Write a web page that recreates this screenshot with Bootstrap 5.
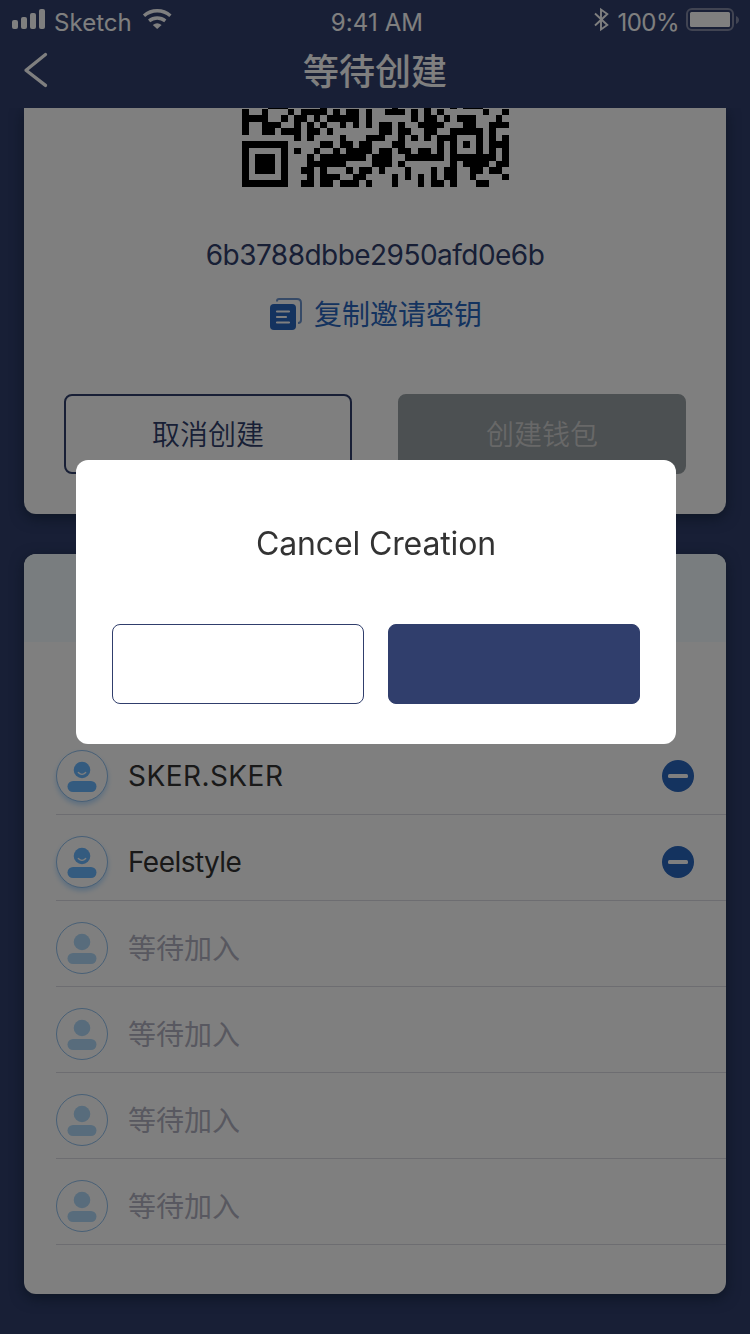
<!DOCTYPE html>
<html lang="zh-CN">
<head>
<meta charset="utf-8">
<meta name="viewport" content="width=device-width, initial-scale=1">
<title>等待创建</title>
<link href="https://cdn.jsdelivr.net/npm/bootstrap@5.3.0/dist/css/bootstrap.min.css" rel="stylesheet">
<style>
body{width:750px;height:1334px;overflow:hidden;background:#303e6c;color:#333;font-family:Inter,"Noto Sans CJK SC",sans-serif;font-size:28px;line-height:40px;font-weight:375}
svg{display:block;flex:none}
.status{height:44px;font-size:24px;line-height:46px;color:#fff;letter-spacing:.05px}
.clock{letter-spacing:.1px}
.percent{letter-spacing:-.5px;margin:0 1px 0 3px}
.topbar{height:64px;font-size:36px;line-height:56px;color:#fff}
.panel{border:0;border-radius:12px;box-shadow:0 4px 14px rgba(14,32,50,.65);margin:0 24px;background:#fff}
.invite{height:406px;border-radius:0 0 12px 12px}
.viewport{height:1226px;overflow:hidden}
.key{color:#303e6c;margin-top:48px;letter-spacing:-.53px}
.copy{color:#2866be;margin-top:19px;padding-left:2px}
.copy span{padding-top:2px;line-height:38px}
.act{width:288px;height:80px;border-radius:8px;font-size:28px;padding:0;line-height:78px;font-weight:350}
.act-line{border:2px solid #303e6c;color:#303e6c}
.act-off,.act-off:disabled{background:#98a0a4;color:#d0d0d0;border:2px solid #98a0a4;opacity:1}
.members{height:740px;margin-top:40px;overflow:visible}
.mhead{height:88px;background:#f2fbff;border-radius:12px 12px 0 0}
.member{height:86px;margin-left:32px;padding:8px 32px 0 0;border-bottom:1px solid #dadbe2}
.face{width:52px;height:52px;border:1px solid #90bfec;border-radius:50%;color:#69b6ff;margin-right:20px;background:#fff}
.face-on{box-shadow:0 3px 5px rgba(105,182,255,.45)}
.waiting{color:#b0b0c0}
.waiting span{padding-top:2px}
.waiting .face{color:#b1d9f8}
.caps{letter-spacing:.45px}
.mixed{letter-spacing:-.55px}
.caps,.mixed{padding-top:1px}
.modal-backdrop.dim{--bs-backdrop-opacity:.5;opacity:.5}
.dialog{width:600px;height:284px;margin:460px 0 0 76px;border:0;border-radius:12px;padding:60px 36px 40px}
.dialog h1{font-size:32px;line-height:47px;font-weight:375;letter-spacing:-.13px;margin:0}
.choice{width:252px;height:80px;border-radius:8px;border:1px solid #303e6c}
.choice-fill{background:#303e6c}
</style>
</head>
<body>
<header>
  <div class="status d-flex position-relative">
    <svg width="48" height="44" fill="#fff"><rect x="12" y="20" width="6" height="9" rx="2"/><rect x="21" y="17" width="6" height="12" rx="2"/><rect x="30" y="13" width="6" height="16" rx="2"/><rect x="39" y="9" width="6" height="20" rx="2"/></svg>
    <span style="margin-left:6px">Sketch</span>
    <svg width="36" height="44" style="margin-left:7px" viewBox="139 0 36 44" fill="none" stroke="#fff" stroke-width="3.4"><path d="M144 15.700c7.600-6.700 18.800-6.700 26.400 0M149.100 20.900c4.800-3.900 11.400-3.900 16.200 0"/><path d="M152.800 25q4.400-3.400 8.800 0l-4.400 4z" fill="#fff" stroke="none"/></svg>
    <span class="clock position-absolute top-0 start-50 translate-middle-x ps-1 text-nowrap">9:41 AM</span>
    <svg class="ms-auto" width="22" height="44" viewBox="594 0 22 44" fill="none" stroke="#fff" stroke-width="1.900"><path d="M597 13.500l12.300 11.500-6.300 4.500v-20l6.300 4.500L597 25.500"/></svg>
    <span class="percent">100%</span>
    <svg width="70" height="44" viewBox="680 0 70 44"><rect x="687" y="9" width="46" height="21" rx="5" fill="none" stroke="#8289a5" stroke-width="2"/><rect x="690" y="12" width="40" height="15" rx="1.500" fill="#fff"/><path d="M736 16c4 1.500 4 6.500 0 8z" fill="#8289a5"/></svg>
  </div>
  <div class="topbar position-relative text-center fw-medium">
    <svg class="position-absolute top-0 start-0" width="60" height="56" viewBox="0 44 60 56" fill="none" stroke="#fff" stroke-width="3.300" stroke-linecap="round" stroke-linejoin="round"><path d="M45.500 54.500L26 70.200l19.500 15.200"/></svg>
    等待创建
  </div>
</header>
<main class="viewport">
  <section class="panel invite">
    <svg id="qr" class="mx-auto" width="268" height="79" viewBox="0 0 268 79" style="transform:translateX(.5px)" shape-rendering="crispEdges"></svg>
    <div class="key text-center">6b3788dbbe2950afd0e6b</div>
    <div class="copy d-flex justify-content-center align-items-center">
      <svg width="32" height="32" viewBox="0 0 32 32" fill="none"><path d="M7 3.500V3q0-2 2-2h18q4 0 4 4v17q0 3-3 3" stroke="#6d95ce" stroke-width="2"/><rect y="6" width="26" height="26" rx="4" fill="#2866be"/><path d="M7 13.500h12M7 19h9M7 24.500h12" stroke="#fff" stroke-width="2.200" stroke-linecap="round"/></svg>
      <span style="margin-left:12px">复制邀请密钥</span>
    </div>
    <div class="d-flex justify-content-between px-4 mx-3" style="margin-top:60px">
      <button class="btn act act-line">取消创建</button>
      <button class="btn act act-off" disabled>创建钱包</button>
    </div>
  </section>
  <section class="panel members">
    <div class="mhead"></div>
    <div id="members" style="padding-top:87px"></div>
  </section>
</main>
<div class="modal-backdrop dim"></div>
<div class="modal d-block">
  <div class="modal-content dialog">
    <h1 class="text-center">Cancel Creation</h1>
    <div class="d-flex justify-content-between mt-auto">
      <button class="btn choice" aria-label="No"></button>
      <button class="btn choice choice-fill" aria-label="Yes"></button>
    </div>
  </div>
</div>
<script src="https://cdn.jsdelivr.net/npm/bootstrap@5.3.0/dist/js/bootstrap.bundle.min.js"></script>
<script>
// dark modules of each visible QR row, as column indexes and ranges
const rows=['4-6 12 23 28 32 34-36',
'0 3 7 9-12 14 16-17 19 22-24 26 28 30 37 40',
'0-3 6 8-9 11 13-17 19 26 28-29 31 33-35 39',
'0 3-5 8 10 12 15 17 19 21-22 24 27-30 34-35 38-40',
'0 3-4 6-8 10-11 13 21-22 24-25 28-29 32-36 38',
'8 10 15 19-21 24 26 28 30-32 36 38 40',
'0-6 12-13 15-16 18-19 23-24 30 32 34 36 38-40',
'0 6 8 11 14 16-19 21-22 24-25 27-28 30 32 36 38 40',
'0 2-4 6 10 12-18 20-22 25-30 32-38 40',
'0 2-4 6 10-15 20-22 24 32 34-37 39-40',
'0 2-4 6 9-10 12 16 18-19 21 25 29 31-32 35-36 38-39',
'0 6 10 12-14 17-18 23 25 27 29 31-32 35 40',
'0-6 9-10 12-13 15-17 19 23 27 29-30 32 36-37'];
const m=6.512;let d='';
rows.forEach((r,i)=>r.split(' ').forEach(s=>{
  const [a,b=a]=s.split('-').map(Number);
  const y=Math.round(.86+(i-1)*m),y2=Math.round(.86+i*m),x=Math.round(a*m),x2=Math.round((b+1)*m);
  d+=`M${x} ${y}H${x2}V${y2}H${x}z`;
}));
document.getElementById('qr').innerHTML=`<path d="${d}"/>`;
const names=['SKER.SKER','Feelstyle','等待加入','等待加入','等待加入','等待加入'];
document.getElementById('members').innerHTML=names.map((n,i)=>{
  const on=i<2;
  return `<div class="member d-flex align-items-center${on?'':' waiting'}"><div class="face${on?' face-on':''}"><svg width="50" height="50" viewBox="1 1 50 50"><circle cx="26" cy="20" r="8.300" fill="currentColor"/><rect x="11.500" y="31" width="29" height="11" rx="5.500" fill="currentColor"/>${on?'<path d="M22.300 22.500q3.700 3.700 7.400 0" fill="none" stroke="#fff" stroke-width="1.300" stroke-linecap="round"/>':''}</svg></div><span class="${['caps','mixed'][i]||''}">${n}</span>${on?'<svg class="ms-auto" width="32" height="32"><circle cx="16" cy="16" r="16" fill="#2866be"/><rect x="6" y="14" width="20" height="4" rx="1.500" fill="#fff"/></svg>':''}</div>`;
}).join('');
</script>
</body>
</html>
